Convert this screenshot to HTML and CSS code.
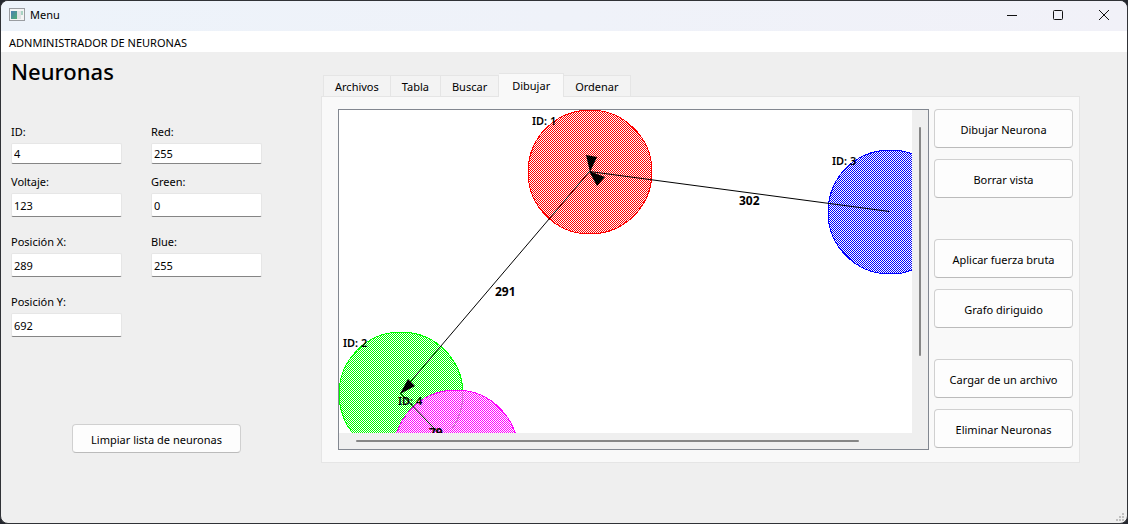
FILE: index.html
```
<!DOCTYPE html>
<html lang="es">
<head>
<meta charset="utf-8">
<title>Menu</title>
<link rel="stylesheet" href="styles.css">
</head>
<body>
<div class="window">
  <header class="titlebar">
    <svg class="app-icon" width="16" height="14" viewBox="0 0 16 14" aria-hidden="true">
      <defs><linearGradient id="pane" x1="0" y1="0" x2="1" y2="1"><stop offset="0" stop-color="#4a7fb5"/><stop offset="1" stop-color="#4fae72"/></linearGradient></defs>
      <rect x="0.5" y="0.5" width="15" height="12" fill="#f4f4f4" stroke="#9a9da1"/>
      <rect x="2" y="3" width="6" height="8" fill="url(#pane)"/>
      <rect x="8" y="3" width="4" height="8" fill="#dfe2e4"/>
      <rect x="12" y="3" width="2" height="4" fill="#a9d3c3"/>
    </svg>
    <span class="title">Menu</span>
    <div class="window-buttons">
      <button type="button" aria-label="Minimizar"><svg width="12" height="12" viewBox="0 0 12 12"><path d="M1 6.5h10"/></svg></button>
      <button type="button" aria-label="Maximizar"><svg width="12" height="12" viewBox="0 0 12 12"><rect x="1.5" y="1.5" width="9" height="9" rx="1"/></svg></button>
      <button type="button" aria-label="Cerrar"><svg width="12" height="12" viewBox="0 0 12 12"><path d="M1 1l10 10M11 1L1 11"/></svg></button>
    </div>
  </header>
  <nav class="menubar"><button type="button">ADNMINISTRADOR DE NEURONAS</button></nav>
  <main class="content">
    <section class="form-side">
      <h1>Neuronas</h1>
      <form class="fields">
        <div class="column">
          <div class="field first"><label for="id">ID:</label><input id="id" value="4"></div>
          <div class="field"><label for="voltaje">Voltaje:</label><input id="voltaje" value="123"></div>
          <div class="field"><label for="px">Posición X:</label><input id="px" value="289"></div>
          <div class="field"><label for="py">Posición Y:</label><input id="py" value="692"></div>
        </div>
        <div class="column">
          <div class="field first"><label for="red">Red:</label><input id="red" value="255"></div>
          <div class="field"><label for="green">Green:</label><input id="green" value="0"></div>
          <div class="field"><label for="blue">Blue:</label><input id="blue" value="255"></div>
        </div>
      </form>
      <button type="button" class="push clear">Limpiar lista de neuronas</button>
    </section>
    <section class="tabs-side">
      <div class="tabs" role="tablist">
        <button type="button" role="tab" aria-selected="false">Archivos</button>
        <button type="button" role="tab" aria-selected="false">Tabla</button>
        <button type="button" role="tab" aria-selected="false">Buscar</button>
        <button type="button" role="tab" aria-selected="true">Dibujar</button>
        <button type="button" role="tab" aria-selected="false">Ordenar</button>
      </div>
      <div class="panel" role="tabpanel">
        <div class="view">
          <div class="scene">
            <svg class="graph" width="573" height="323" viewBox="0 0 573 323" role="img" aria-label="Grafo de neuronas">
              <defs>
                <pattern id="red-fill" width="2" height="2" patternUnits="userSpaceOnUse"><rect width="2" height="2" fill="#fff"/><path fill="#f00" d="M1 0h1v1H1zM0 1h1v1H0z"/></pattern>
                <pattern id="green-fill" width="2" height="2" patternUnits="userSpaceOnUse"><rect width="2" height="2" fill="#fff"/><path fill="#0f0" d="M1 0h1v1H1zM0 1h1v1H0z"/></pattern>
                <pattern id="blue-fill" width="2" height="2" patternUnits="userSpaceOnUse"><rect width="2" height="2" fill="#fff"/><path fill="#00f" d="M1 0h1v1H1zM0 1h1v1H0z"/></pattern>
                <pattern id="magenta-fill" width="2" height="2" patternUnits="userSpaceOnUse"><rect width="2" height="2" fill="#fff"/><path fill="#f0f" d="M1 0h1v1H1zM0 1h1v1H0z"/></pattern>
              </defs>
              <g class="neurons">
                <circle cx="251" cy="62" r="62" fill="url(#red-fill)" stroke="#f00"/>
                <circle cx="62" cy="284" r="62" fill="url(#green-fill)" stroke="#0f0"/>
                <circle cx="551" cy="102" r="62" fill="url(#blue-fill)" stroke="#00f"/>
                <circle cx="117" cy="342" r="62" fill="url(#magenta-fill)" stroke="#f0f"/>
                <path d="M124 282A62 62 0 0 1 113 319" fill="none" stroke="#a06ca0" stroke-opacity="0.5"/>
              </g>
              <g class="edges">
                <path d="M250.500 61.500L61.500 283.500M550.500 101.500L250.500 61.500M61.500 283.500L117.500 341.500"/>
                <path class="head" d="M251 62L247 45L258 47zM250 61L266 67L258 76zM61 284L69 269L76 276z"/>
              </g>
              <g class="names">
                <text x="193" y="15">ID: 1</text>
                <text x="4" y="237">ID: 2</text>
                <text x="493" y="55">ID: 3</text>
                <text x="59" y="295">ID: 4</text>
              </g>
              <g class="weights">
                <text x="400" y="95">302</text>
                <text x="156" y="186">291</text>
                <text x="90" y="327">79</text>
              </g>
            </svg>
          </div>
          <div class="scroll-v"><span></span></div>
          <div class="scroll-h"><span></span></div>
        </div>
        <div class="actions">
          <button type="button" class="push">Dibujar Neurona</button>
          <button type="button" class="push">Borrar vista</button>
          <button type="button" class="push after-wide">Aplicar fuerza bruta</button>
          <button type="button" class="push">Grafo diriguido</button>
          <button type="button" class="push after-gap">Cargar de un archivo</button>
          <button type="button" class="push">Eliminar Neuronas</button>
        </div>
      </div>
    </section>
  </main>
  <svg class="grip" width="8" height="8" viewBox="0 0 8 8" aria-hidden="true"><path fill="#bfbfbf" d="M6 0h2v2H6zM3 3h2v2H3zM6 3h2v2H6zM0 6h2v2H0zM3 6h2v2H3zM6 6h2v2H6z"/></svg>
</div>
</body>
</html>
```
FILE: styles.css
```
* { box-sizing: border-box; }
body {
  margin: 0;
  background: #24272e;
  color: #000;
  font: 11px/16px "Noto Sans", "Open Sans", sans-serif;
}
button, input { font: inherit; color: inherit; }
button { padding: 0; border: 0; background: none; white-space: nowrap; }
.window {
  position: relative;
  display: flex;
  flex-direction: column;
  min-height: 100vh;
  border: 1px solid #303236;
  border-radius: 8px;
  background: #efefef;
  overflow: hidden;
}
.titlebar {
  display: flex;
  align-items: center;
  height: 30px;
  padding: 0 0 2px 8px;
  background: linear-gradient(90deg, #edf3fa, #f1f1f8);
}
.title { margin-left: 5px; }
.window-buttons { display: flex; margin-left: auto; }
.window-buttons button {
  display: grid;
  place-items: center;
  width: 46px;
  height: 28px;
}
.window-buttons svg { fill: none; stroke: #111; }
.menubar { padding: 4px 8px 1px; background: #fff; }
.menubar button { display: block; }
.content { display: flex; flex: 1; }
.form-side { width: 320px; flex: none; padding: 3px 10px 0; }
h1 { margin: 0; font: 500 22px/32px "Noto Sans", "Open Sans", sans-serif; }
.fields { display: flex; gap: 29px; margin-top: 37px; height: 214px; }
.column { width: 111px; }
.field { margin-bottom: 10px; }
.field + .field + .field { margin-top: 17px; }
.field label { display: block; margin-bottom: 3px; }
.field input {
  display: block;
  width: 100%;
  height: 24px;
  padding: 0 2px;
  border: 1px solid #e6e6e6;
  border-bottom-color: #858585;
  border-radius: 2px;
  background: #fff;
}
.field.first input { height: 21px; }
.push {
  padding-top: 2px;
  border: 1px solid #d0d0d0;
  border-bottom-color: #bbb;
  border-radius: 4px;
  background: #fdfdfd;
}
.clear { display: block; width: 169px; height: 29px; margin: 86px 0 0 61px; }
.tabs-side { flex: 1; min-width: 0; padding: 21px 47px 20px 0; }
.tabs { display: flex; align-items: flex-end; height: 23px; padding-left: 2px; }
.tabs button {
  height: 21px;
  padding: 1px 11px 0;
  border: 1px solid #e5e5e5;
  border-width: 1px 1px 0 0;
  background: #f3f3f3;
}
.tabs button:first-child { border-left-width: 1px; }
.tabs button[aria-selected="true"] {
  height: 24px;
  padding: 0 13px;
  margin-bottom: -1px;
  background: #f9f9f9;
}
.panel {
  display: flex;
  gap: 5px;
  padding: 12px 6px 12px 16px;
  border: 1px solid #e5e5e5;
  background: #f9f9f9;
}
.view {
  display: grid;
  grid-template: 323px 16px / 1fr 16px;
  flex: 1;
  min-width: 0;
  border: 1px solid #828790;
  background: #efefef;
}
.scene { min-width: 0; overflow: hidden; background: #fff; }
.graph { display: block; }
.neurons { shape-rendering: crispEdges; }
.edges { fill: none; stroke: #000; }
.edges .head { fill: #000; stroke: none; }
.names { font-weight: 600; }
.weights { font-size: 12px; font-weight: 700; }
.scroll-v { padding: 17px 7px 77px; }
.scroll-h { padding: 7px 53px 7px 17px; }
.scroll-v span, .scroll-h span { display: block; height: 100%; background: #868686; border-radius: 1px; }
.actions { display: flex; flex-direction: column; gap: 11px; width: 139px; }
.actions .push { height: 39px; }
.actions .after-wide { margin-top: 30px; }
.actions .after-gap { margin-top: 20px; }
.grip { position: absolute; right: 3px; bottom: 2px; }
```
